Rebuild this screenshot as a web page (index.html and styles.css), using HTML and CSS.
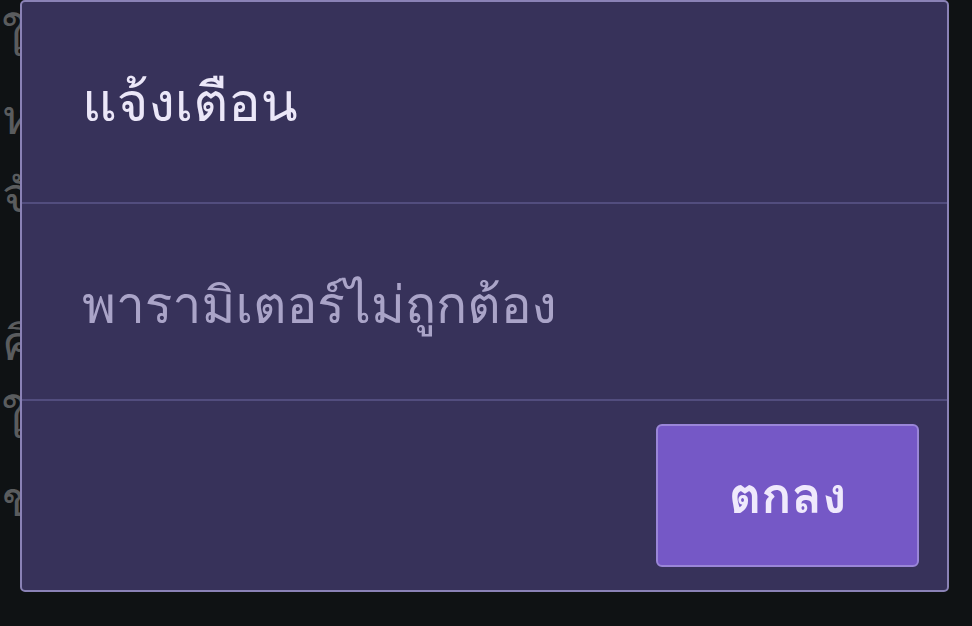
FILE: index.html
```html
<!DOCTYPE html>
<html lang="th">
<head>
  <meta charset="UTF-8">
  <title>แจ้งเตือน</title>
  <link rel="stylesheet" href="styles.css">
</head>
<body>

  <div class="page">
    <p class="bg-line">ใบ</p>
    <p class="bg-line">หน</p>
    <p class="bg-line">จั</p>
    <p class="bg-line gap">คิ</p>
    <p class="bg-line">ใน</p>
    <p class="bg-line">ขอ</p>
  </div>

  <div class="overlay">
    <div class="dialog">
      <div class="dialog-head">
        <h2>แจ้งเตือน</h2>
      </div>
      <div class="dialog-body">
        <p>พารามิเตอร์ไม่ถูกต้อง</p>
      </div>
      <div class="dialog-foot">
        <button class="btn-ok">ตกลง</button>
      </div>
    </div>
  </div>

</body>
</html>
```

FILE: styles.css
```css
body {
  margin: 0;
  background: #0f1214;
  font-family: "Loma", "Noto Sans", sans-serif;
  overflow: hidden;
  height: 626px;
}
.page {
  padding: 0 0 0 2px;
}
.bg-line {
  margin: 0;
  height: 78px;
  line-height: 78px;
  font-size: 48px;
  color: #5a5c5e;
  white-space: nowrap;
}
.bg-line.gap {
  margin-top: 70px;
}
.overlay {
  position: absolute;
  top: 0;
  left: 20px;
}
.dialog {
  width: 925px;
  height: 588px;
  background: #37325a;
  border: 2px solid #8a82b6;
  border-radius: 5px;
  display: flex;
  flex-direction: column;
}
.dialog-head {
  height: 200px;
  padding: 0 60px;
  border-bottom: 2px solid #524d7e;
  display: flex;
  align-items: center;
}
.dialog-head h2 {
  margin: 0;
  font-size: 54px;
  font-weight: 400;
  color: #ebe7f8;
  cursor: pointer;
}
.dialog-body {
  height: 195px;
  padding: 0 60px;
  border-bottom: 2px solid #524d7e;
  display: flex;
  align-items: center;
}
.dialog-body p {
  margin: 0;
  margin-top: 6px;
  font-size: 51.5px;
  color: #aaa4c8;
}
.dialog-foot {
  flex: 1;
  display: flex;
  justify-content: flex-end;
  align-items: center;
  padding: 0 28px;
}
.btn-ok {
  width: 263px;
  height: 143px;
  background: #7558c6;
  border: 2px solid #9a86d8;
  border-radius: 6px;
  color: #efe9fc;
  font-family: inherit;
  font-size: 50px;
  font-weight: 700;
  cursor: pointer;
}
```
